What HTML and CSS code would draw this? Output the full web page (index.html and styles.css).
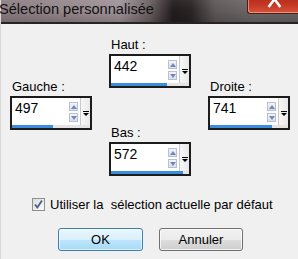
FILE: index.html
```html
<!DOCTYPE html>
<html lang="fr">
<head>
<meta charset="utf-8">
<title>Sélection personnalisée</title>
<link rel="stylesheet" href="styles.css">
</head>
<body>
<div class="dialog">
  <div class="titlebar">
    <span class="title">Sélection personnalisée</span>
    <div class="close">
      <svg width="51" height="13" viewBox="0 0 51 13">
        <path d="M21 7 L27 -1 L33 7" fill="none" stroke="#fff" stroke-width="2.6" stroke-linejoin="miter"/>
      </svg>
    </div>
  </div>

  <div class="fields">
    <div class="col side">
      <div class="lbl">Gauche :</div>
      <div class="spin">
        <div class="spin-main">
          <span class="val">497</span>
          <div class="arrows"><span class="arr up"></span><span class="arr down"></span></div>
          <div class="drop"><span class="drop-ic"></span></div>
        </div>
        <div class="bar"><div class="fill" style="width:52%"></div></div>
      </div>
    </div>

    <div class="col center">
      <div class="lbl">Haut :</div>
      <div class="spin">
        <div class="spin-main">
          <span class="val">442</span>
          <div class="arrows"><span class="arr up"></span><span class="arr down"></span></div>
          <div class="drop"><span class="drop-ic"></span></div>
        </div>
        <div class="bar"><div class="fill" style="width:72%"></div></div>
      </div>
      <div class="lbl lbl-bas">Bas :</div>
      <div class="spin">
        <div class="spin-main">
          <span class="val">572</span>
          <div class="arrows"><span class="arr up"></span><span class="arr down"></span></div>
          <div class="drop"><span class="drop-ic"></span></div>
        </div>
        <div class="bar"><div class="fill" style="width:92%"></div></div>
      </div>
    </div>

    <div class="col side">
      <div class="lbl">Droite :</div>
      <div class="spin">
        <div class="spin-main">
          <span class="val">741</span>
          <div class="arrows"><span class="arr up"></span><span class="arr down"></span></div>
          <div class="drop"><span class="drop-ic"></span></div>
        </div>
        <div class="bar"><div class="fill" style="width:79%"></div></div>
      </div>
    </div>
  </div>

  <div class="check">
    <span class="box">
      <svg width="11" height="11" viewBox="0 0 11 11">
        <path d="M2 5.5 L4.3 8.5 L9 1.5" fill="none" stroke="#4b5e8c" stroke-width="1.8"/>
      </svg>
    </span>
    <span class="check-txt">Utiliser la  sélection actuelle par défaut</span>
  </div>

  <div class="buttons">
    <button class="btn btn-ok">OK</button>
    <button class="btn btn-cancel">Annuler</button>
  </div>
</div>
</body>
</html>
```

FILE: styles.css
```css
* { box-sizing: border-box; }

html, body {
  margin: 0;
  padding: 0;
}

body {
  width: 298px;
  height: 259px;
  overflow: hidden;
  background: #f0f0f0;
  font-family: "Liberation Sans", Arial, sans-serif;
  color: #000;
}

.dialog {
  width: 298px;
  height: 259px;
  display: flex;
  flex-direction: column;
  border-left: 1px solid #dadada;
}

.titlebar {
  height: 24px;
  display: flex;
  align-items: flex-start;
  border-bottom: 2px solid #262324;
  background:
    linear-gradient(180deg, rgba(255,255,255,0.06) 0%, rgba(0,0,0,0) 45%, rgba(0,0,0,0.18) 100%),
    linear-gradient(90deg, #8c7f83 0%, #978a8e 25%, #a0949a 40%, #6c6163 50%, #221c1e 58%, #2a2425 64%, #5f5859 72%, #6e6869 85%, #6a6466 100%);
}

.title {
  font-size: 14.6px;
  line-height: 18px;
  margin-left: -2px;
  color: #121012;
  white-space: nowrap;
  flex: 1;
}

.close {
  width: 51px;
  height: 14px;
  border: 1px solid #4a1d17;
  border-top: none;
  border-right: none;
  border-radius: 0 0 0 3px;
  background: linear-gradient(180deg, #b9301f 0%, #c83c28 50%, #d8553c 100%);
  box-shadow: inset 1px -1px 0 rgba(255,200,180,0.55);
  display: flex;
  overflow: hidden;
}

.close svg { display: block; }

.fields {
  display: flex;
  gap: 17px;
  padding: 13px 0 0 9px;
}

.col {
  width: 82px;
  display: flex;
  flex-direction: column;
}

.side { padding-top: 42px; }

.lbl {
  font-size: 13px;
  line-height: 15px;
  padding-left: 2px;
  margin-bottom: 2px;
  white-space: nowrap;
}

.lbl-bas { margin-top: 37px; }

.spin {
  width: 82px;
  height: 34px;
  border: 2px solid #1c1c1c;
  background: #fff;
  display: flex;
  flex-direction: column;
}

.spin-main {
  flex: 1;
  display: flex;
  align-items: stretch;
}

.val {
  flex: 1;
  font-size: 14px;
  line-height: 16px;
  padding: 2px 0 0 3px;
}

.arrows {
  width: 9px;
  display: flex;
  flex-direction: column;
  gap: 2px;
  padding-top: 4px;
  margin-right: 2px;
}

.arr {
  width: 9px;
  height: 9px;
  border: 1px solid #b9c0cf;
  background: linear-gradient(180deg, #f3f5fa, #d9deea);
  position: relative;
}

.arr::after {
  content: "";
  position: absolute;
  left: 1px;
  width: 0;
  height: 0;
  border-left: 3.5px solid transparent;
  border-right: 3.5px solid transparent;
}

.up::after {
  top: 2px;
  border-bottom: 4px solid #7288bb;
}

.down::after {
  top: 2px;
  border-top: 4px solid #7288bb;
}

.drop {
  width: 10px;
  border-left: 1px solid #c9c9c9;
  background: linear-gradient(90deg, #f7f7f7, #e9e9e9);
  display: flex;
  justify-content: center;
  align-items: center;
  padding-top: 3px;
}

.drop-ic {
  width: 6px;
  height: 5px;
  border-top: 1px solid #000;
  position: relative;
}

.drop-ic::after {
  content: "";
  position: absolute;
  left: 0;
  top: 1px;
  border-left: 3px solid transparent;
  border-right: 3px solid transparent;
  border-top: 3px solid #000;
}

.bar {
  height: 3px;
  background: #e4e4e4;
}

.fill {
  height: 3px;
  background: #3b8ddd;
}

.check {
  display: flex;
  align-items: center;
  gap: 5px;
  margin-top: 21px;
  padding-left: 31px;
  height: 15px;
}

.box {
  width: 13px;
  height: 13px;
  border: 1px solid #8e8f8f;
  background: linear-gradient(135deg, #dcdcdc, #fbfbfb);
  display: flex;
  align-items: center;
  justify-content: center;
}

.box svg { display: block; }

.check-txt {
  font-size: 13px;
  line-height: 15px;
  white-space: pre;
}

.buttons {
  display: flex;
  gap: 16px;
  margin-top: 16px;
  padding-left: 57px;
}

.btn {
  height: 23px;
  font-family: "Liberation Sans", Arial, sans-serif;
  font-size: 13px;
  color: #000;
  border-radius: 3px;
  padding: 0;
  margin: 0;
}

.btn-ok {
  width: 85px;
  border: 1px solid #3c7fb1;
  background: linear-gradient(180deg, #eaf6fd 0%, #d9f0fc 50%, #bee6fd 50%, #a7d9f5 100%);
  box-shadow: inset 0 0 0 1px rgba(255,255,255,0.6);
}

.btn-cancel {
  width: 84px;
  border: 1px solid #707070;
  background: linear-gradient(180deg, #f2f2f2 0%, #ebebeb 50%, #dddddd 50%, #cfcfcf 100%);
  box-shadow: inset 0 0 0 1px rgba(255,255,255,0.7);
}
```
